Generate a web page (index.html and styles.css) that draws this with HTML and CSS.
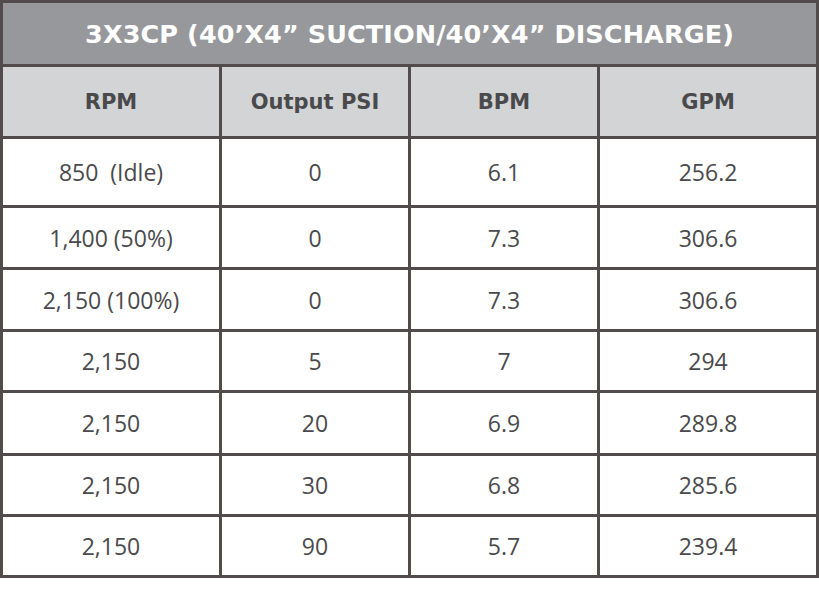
FILE: index.html
```html
<!DOCTYPE html>
<html lang="en">
<head>
<meta charset="utf-8">
<title>3X3CP Pump Performance</title>
<link rel="stylesheet" href="styles.css">
</head>
<body>
<table class="perf">
  <colgroup>
    <col class="col-wide">
    <col class="col-narrow">
    <col class="col-narrow">
    <col class="col-wide">
  </colgroup>
  <thead>
    <tr class="title-row"><th colspan="4">3X3CP (40’X4” SUCTION/40’X4” DISCHARGE)</th></tr>
    <tr class="head-row"><th>RPM</th><th>Output PSI</th><th>BPM</th><th>GPM</th></tr>
  </thead>
  <tbody>
    <tr class="r1"><td>850&nbsp; (Idle)</td><td>0</td><td>6.1</td><td>256.2</td></tr>
    <tr class="r59"><td>1,400 (50%)</td><td>0</td><td>7.3</td><td>306.6</td></tr>
    <tr class="r59"><td>2,150 (100%)</td><td>0</td><td>7.3</td><td>306.6</td></tr>
    <tr class="r58"><td>2,150</td><td>5</td><td>7</td><td>294</td></tr>
    <tr class="r60"><td>2,150</td><td>20</td><td>6.9</td><td>289.8</td></tr>
    <tr class="r58"><td>2,150</td><td>30</td><td>6.8</td><td>285.6</td></tr>
    <tr class="r58"><td>2,150</td><td>90</td><td>5.7</td><td>239.4</td></tr>
  </tbody>
</table>
</body>
</html>
```
FILE: styles.css
```css
html, body {
  margin: 0;
  padding: 0;
  background: #ffffff;
}

.perf {
  width: 819px;
  table-layout: fixed;
  border-collapse: separate;
  border-spacing: 3px;
  background: #514b4b;
}

.col-wide { width: 216px; }
.col-narrow { width: 186px; }

.perf th,
.perf td {
  padding: 0;
  text-align: center;
  vertical-align: middle;
  white-space: nowrap;
}

.title-row th {
  height: 61px;
  background: #97989c;
  color: #ffffff;
  font-family: "DejaVu Sans", sans-serif;
  font-weight: 700;
  font-size: 25.5px;
  letter-spacing: 0.1px;
}

.head-row th {
  height: 69px;
  background: #d3d4d6;
  color: #4a4a4c;
  font-family: "DejaVu Sans", sans-serif;
  font-weight: 700;
  font-size: 21px;
}

.perf td {
  background: #ffffff;
  color: #4a4a4c;
  font-family: "Open Sans", sans-serif;
  font-weight: 500;
  font-size: 23px;
}

.r1 td { height: 66px; }
.r59 td { height: 59px; }
.r58 td { height: 58px; }
.r60 td { height: 60px; }
```
